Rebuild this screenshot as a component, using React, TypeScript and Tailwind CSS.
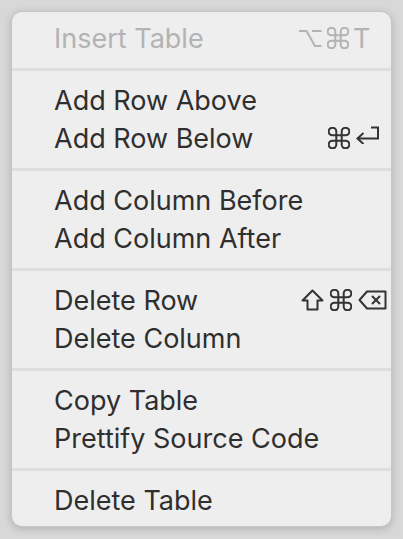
import React from 'react';

const ink = '#333333';

function OptionKey({ color }: { color: string }) {
  return (
    <svg width="24" height="19" viewBox="0 0 24 19" fill="none" stroke={color} strokeWidth="2" strokeLinecap="butt">
      <path d="M1 2H8.5L17 17H23.5M14 2H23.5" />
    </svg>
  );
}

function CmdKey({ color }: { color: string }) {
  return (
    <svg width="22" height="22" viewBox="0 0 22 22" fill="none" stroke={color} strokeWidth="2">
      <path d="M13.7 4.5v13a3.8 3.8 0 1 0 3.8-3.8H4.5a3.8 3.8 0 1 0 3.8 3.8V4.5a3.8 3.8 0 1 0-3.8 3.8h13a3.8 3.8 0 1 0-3.8-3.8" />
    </svg>
  );
}

function ReturnKey() {
  return (
    <svg width="25" height="18" viewBox="0 0 25 18" fill="none" stroke={ink} strokeWidth="2">
      <path d="M16 1.5H23V12.5H3" />
      <path d="M8.5 7L2.5 12.5L8.5 18" />
    </svg>
  );
}

function ShiftKey() {
  return (
    <svg width="23" height="22" viewBox="0 0 23 22" fill="none" stroke={ink} strokeWidth="2" strokeLinejoin="round">
      <path d="M11.5 1.5L21.5 11.5H16.5V20.5H6.5V11.5H1.5Z" />
    </svg>
  );
}

function DeleteKey() {
  return (
    <svg width="29" height="20" viewBox="0 0 29 20" fill="none" stroke={ink} strokeWidth="2" strokeLinejoin="round">
      <path d="M9 1.5H27.5V18.5H9L1.5 10Z" />
      <path d="M14 6L22 14M22 6L14 14" />
    </svg>
  );
}

function Item({ label, disabled, shortcut }: { label: string; disabled?: boolean; shortcut?: React.ReactNode }) {
  return (
    <div className="flex h-[38px] items-center pl-[42px]">
      <span className={`flex-1 whitespace-nowrap ${disabled ? 'text-[#b3b3b3]' : 'text-[#2f2f2f]'}`}>{label}</span>
      {shortcut && <div className="flex w-[95px] items-center">{shortcut}</div>}
    </div>
  );
}

function Separator() {
  return <div className="mt-[11px] mb-[10px] h-[3px] bg-[#dedede]" />;
}

export default function App() {
  return (
    <div className="h-[539px] w-[403px] bg-[#d8d8d8] pl-[11px] pt-[11px]">
      <div
        className="w-[381px] rounded-[11px] border border-[#c6c6c6] bg-[#eeeeee] py-[7px] text-[27px] leading-none shadow-[0_2px_8px_rgba(0,0,0,0.18)]"
        style={{ fontFamily: 'Inter, "Noto Sans", sans-serif' }}
      >
        <Item
          label="Insert Table"
          disabled
          shortcut={
            <>
              <span className="ml-[2px]"><OptionKey color="#b3b3b3" /></span>
              <span className="ml-[5px]"><CmdKey color="#b3b3b3" /></span>
              <span className="ml-[4px] text-[#b3b3b3]">T</span>
            </>
          }
        />
        <Separator />
        <Item label="Add Row Above" />
        <Item
          label="Add Row Below"
          shortcut={
            <>
              <span className="ml-[32px]"><CmdKey color={ink} /></span>
              <span className="ml-[5px] -mt-[6px]"><ReturnKey /></span>
            </>
          }
        />
        <Separator />
        <Item label="Add Column Before" />
        <Item label="Add Column After" />
        <Separator />
        <Item
          label="Delete Row"
          shortcut={
            <>
              <span className="ml-[5px]"><ShiftKey /></span>
              <span className="ml-[6px]"><CmdKey color={ink} /></span>
              <span className="ml-[6px]"><DeleteKey /></span>
            </>
          }
        />
        <Item label="Delete Column" />
        <Separator />
        <Item label="Copy Table" />
        <Item label="Prettify Source Code" />
        <Separator />
        <Item label="Delete Table" />
      </div>
    </div>
  );
}
